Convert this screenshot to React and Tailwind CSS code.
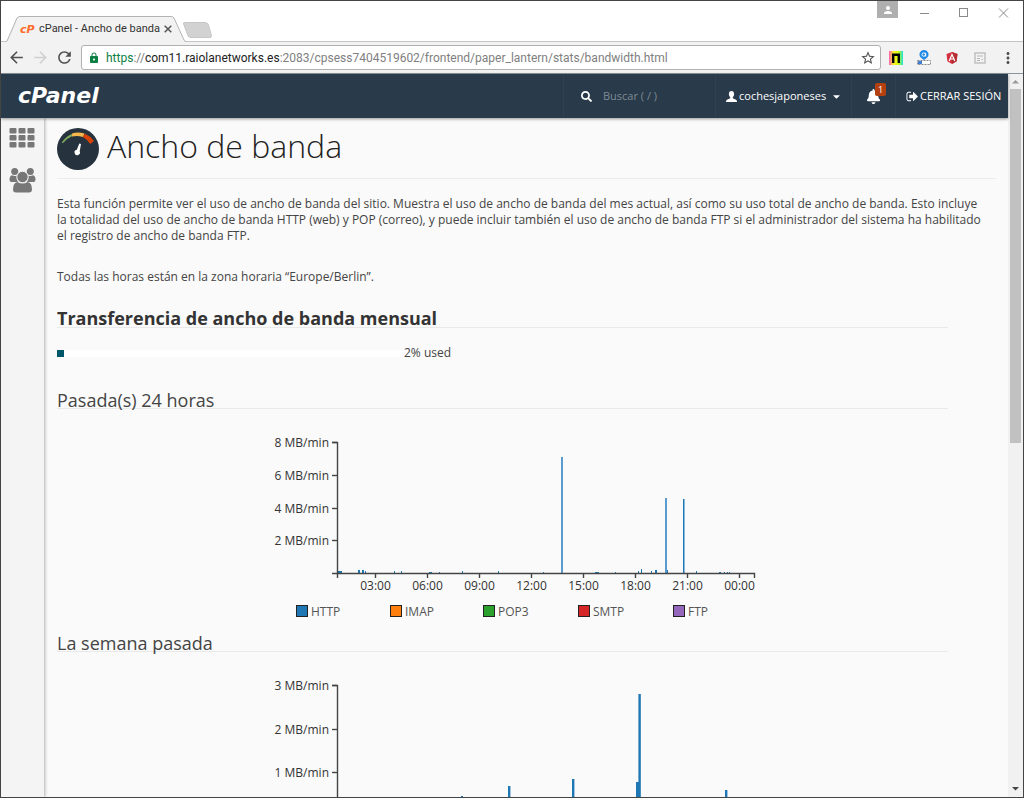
import React from "react";
import { FaSearch, FaBell, FaCaretDown } from "react-icons/fa";
import { MdArrowBack, MdArrowForward, MdRefresh, MdLock, MdStarBorder, MdMoreVert, MdPerson } from "react-icons/md";

const dayBars = [
  [91, 2, 4], [111, 3, 2], [115, 3, 2], [118, 2, 1], [147, 2, 1], [154, 2, 1], [182, 1, 3], [192, 1, 1],
  [215, 2, 1], [251, 2, 1], [296, 1, 1], [314, 116, 2, "#5a9bd0"], [348, 1, 4], [368, 1, 1], [391, 2, 1], [394, 4, 1],
  [404, 2, 1], [408, 3, 2], [418, 75, 2, "#5a9bd0"], [420, 3, 1], [436, 74, 1], [437, 74, 1, "#8ab8da"], [449, 2, 1],
  [472, 1, 2], [477, 1, 1], [480, 1, 1], [482, 1, 1],
];
const weekBars = [
  [214, 20, 2], [261, 30, 2.4], [325, 37, 2.4], [389, 34, 3], [391.4, 122, 2.4], [478, 26, 2.4], [493, 19, 1.5],
];
const hours = ["03:00", "06:00", "09:00", "12:00", "15:00", "18:00", "21:00", "00:00"];
const dayTicks = hours.map((label, i) => ({ label, x: 128 + i * 52 }));
const protocols = [
  ["HTTP", "#1f77b4", 49], ["IMAP", "#ff7f0e", 143], ["POP3", "#2ca02c", 236], ["SMTP", "#d62728", 331], ["FTP", "#9467bd", 426],
];

function BandwidthChart({ title, max, step, bars, ticks = [], legend = [] }) {
  const top = 16;
  const base = 147;
  const rows = [];
  for (let v = max; v >= step; v -= step) rows.push({ v, y: Math.round(base - (v / max) * (base - top)) });
  return (
    <svg className="mx-auto mt-[17px] block" width="511" height="197" role="img" aria-label={title}>
      {bars.map(([x, h, w, fill = "#1f77b4"]) => (
        <rect key={x} x={x} y={base - h} width={w} height={h} fill={fill} />
      ))}
      <g fill="none" stroke="#444" strokeWidth="1.4">
        <path d={`M85 ${top + 0.5}H90.5V${base + 0.5}H85`} />
        {rows.map((r) => <path key={r.v} d={`M85 ${r.y + 0.5}H90`} />)}
        <path d={`M90.5 ${base + 5}V${base + 0.5}H507.5V${base + 5}`} />
        {ticks.map((t) => <path key={t.label} d={`M${t.x + 0.5} ${base}V${base + 5}`} />)}
      </g>
      <g fill="#333" fontSize="12">
        {rows.map((r) => <text key={r.v} x="82" y={r.y + 5} textAnchor="end">{r.v} MB/min</text>)}
        {ticks.map((t) => <text key={t.label} x={t.x + 0.5} y={base + 17} textAnchor="middle">{t.label}</text>)}
      </g>
      {legend.map(([name, color, x]) => (
        <g key={name}>
          <rect x={x + 0.5} y="179.5" width="11" height="11" fill={color} stroke="#222" />
          <text x={x + 15} y="190" fontSize="12" fill="#555">{name}</text>
        </g>
      ))}
    </svg>
  );
}

function SectionTitle({ children, bold }) {
  return (
    <h2 className={`border-b border-[#e9e9e9] text-[18px] ${bold ? "font-bold leading-[18px] text-[#333]" : "pt-[2px] font-normal leading-4 text-[#444]"}`}>
      {children}
    </h2>
  );
}

function TitleBar() {
  return (
    <div className="flex h-10 shrink-0 items-start bg-white">
      <div className="relative z-10 ml-[5px] mt-[15px] flex h-[26px] w-[180px] shrink-0 items-center">
        <svg className="absolute inset-0" width="180" height="26" aria-hidden="true">
          <path d="M0 26L1 25L11 2Q12 .5 14 .5H165Q167 .5 168 2L178 25L180 26Z" fill="#f2f2f2" />
          <path d="M0 25.5Q1 25.5 1.5 24L11 2Q12 .5 14 .5H165Q167 .5 168 2L178 24Q178.5 25.5 180 25.5" fill="none" stroke="#b3b3b3" />
        </svg>
        <span className="relative ml-[14px] w-[19px] shrink-0 font-['DejaVu_Sans',sans-serif] text-[11px] font-bold italic leading-none text-[#ff6c2c]" aria-hidden="true">cP</span>
        <span className="relative flex-1 whitespace-nowrap font-['Roboto',sans-serif] text-[11px] text-[#333]">cPanel - Ancho de banda</span>
        <button className="relative mr-[14px]" aria-label="Cerrar pestaña">
          <svg width="8" height="8" viewBox="0 0 8 8" stroke="#555" strokeWidth="1.5"><path d="M.7 .7L7.3 7.3M7.3 .7L.7 7.3" /></svg>
        </button>
      </div>
      <button className="-ml-[3px] mt-[21px] shrink-0" aria-label="Nueva pestaña">
        <svg className="block" width="29" height="16" viewBox="0 0 29 16"><path d="M1.5 .5H22Q24 .5 25 2L28.4 13Q28.8 15.5 27 15.5H8Q6 15.5 5 14L.6 2Q.2 .5 1.5 .5Z" fill="#d2d2d2" stroke="#c6c6c6" /></svg>
      </button>
      <div className="ml-auto flex items-start">
        <button className="flex h-[17px] w-[21px] items-center justify-center bg-[#afafaf] text-white" aria-label="Perfil"><MdPerson size={12} /></button>
        <button className="ml-[22px] mt-[7px]" aria-label="Minimizar"><svg className="block" width="10" height="10"><path d="M0 5.5H9" stroke="#8a8a8a" /></svg></button>
        <button className="ml-[29px] mt-[7px]" aria-label="Maximizar"><svg className="block" width="10" height="10"><rect x=".5" y=".5" width="8" height="8" fill="none" stroke="#8a8a8a" /></svg></button>
        <button className="ml-[29px] mr-[14px] mt-[7px]" aria-label="Cerrar"><svg className="block" width="11" height="10"><path d="M1 .5L10 9.5M10 .5L1 9.5" stroke="#8a8a8a" /></svg></button>
      </div>
    </div>
  );
}

function Toolbar() {
  return (
    <div className="flex h-[33px] shrink-0 items-center border-y border-b-[#8d959c] border-t-[#c4c4c4] bg-[#f2f2f2] text-[#505050]">
      <button className="ml-[6px]" aria-label="Atrás"><MdArrowBack size={19} /></button>
      <button className="ml-[5px] text-[#d0d0d0]" aria-label="Adelante"><MdArrowForward size={19} /></button>
      <button className="ml-[5px]" aria-label="Recargar"><MdRefresh size={19} /></button>
      <div className="ml-[7px] flex h-[25px] min-w-0 flex-1 items-center rounded-[3px] border border-[#b0b0b0] bg-white">
        <MdLock className="ml-[6px] shrink-0 text-[#0b8043]" size={12} />
        <div className="ml-[6px] flex-1 truncate font-['Roboto',sans-serif] text-[12px] text-[#808080]">
          <span className="text-[#0b8043]">https</span>://<span className="text-[#222]">com11.raiolanetworks.es</span>:2083/cpsess7404519602/frontend/paper_lantern/stats/bandwidth.html
        </div>
        <button className="mr-[4px]" aria-label="Añadir a marcadores"><MdStarBorder size={16} /></button>
      </div>
      <div className="ml-2 mr-2 flex items-center gap-[14px]">
        <button aria-label="Extensión n">
          <svg className="block" width="14" height="14" viewBox="0 0 14 14">
            <defs><linearGradient id="hue"><stop offset="0" stopColor="#ff5fb0" /><stop offset=".3" stopColor="#ffe92e" /><stop offset=".65" stopColor="#d9ff00" /><stop offset="1" stopColor="#19e0dc" /></linearGradient></defs>
            <rect width="14" height="14" fill="url(#hue)" />
            <path d="M4.2 12V3.7H9.8V12" fill="none" stroke="#000" strokeWidth="2.4" />
          </svg>
        </button>
        <button aria-label="Alexa">
          <svg className="block" width="14" height="15" viewBox="0 0 14 15">
            <path d="M7 0a4.4 4.4 0 0 1 3 7.7L7 10 4 7.7A4.4 4.4 0 0 1 7 0Z" fill="#1e88e5" />
            <circle cx="6.7" cy="4.6" r="1.7" fill="none" stroke="#fff" /><path d="M8.7 2.8V6.5" stroke="#fff" />
            <rect x=".5" y="10.5" width="13" height="4" fill="#fff" stroke="#888" strokeDasharray="2 1" /><rect x="1" y="11" width="4" height="3" fill="#3f7fd6" />
          </svg>
        </button>
        <button aria-label="Angular">
          <svg className="block" width="14" height="14" viewBox="0 0 14 14">
            <path d="M7 1L12.5 3 11.6 10.3 7 13 2.4 10.3 1.5 3Z" fill="#d32f3f" /><path d="M7 1L12.5 3 11.6 10.3 7 13Z" fill="#b52e31" />
            <path d="M4.2 10L7 3.5 9.8 10M5.3 8H8.7" fill="none" stroke="#fff" strokeWidth="1.2" />
          </svg>
        </button>
        <button aria-label="Lector">
          <svg className="block" width="14" height="14" viewBox="0 0 14 14" fill="none" stroke="#b8b8b8"><rect x="2" y="2" width="10" height="10" strokeWidth="1.3" /><path d="M4 5H10M4 7.5H7M4 9.5H7M8.5 8.5H10" /></svg>
        </button>
        <button className="flex w-[14px] justify-center" aria-label="Menú"><MdMoreVert className="shrink-0" size={18} /></button>
      </div>
    </div>
  );
}

function AppHeader() {
  return (
    <header className="relative z-20 flex h-11 shrink-0 items-stretch bg-[#293a4a] text-[11px] text-white shadow-[0_1px_3px_rgba(0,0,0,0.4)]">
      <a href="#inicio" className="flex items-center pl-[17px] font-['DejaVu_Sans',sans-serif] text-[22px] font-bold italic leading-none">cPanel</a>
      <div className="ml-auto flex items-stretch">
        <label className="flex w-[152px] items-center gap-[11px] border-l border-[#2f4150] pl-[17px]">
          <FaSearch className="shrink-0" size={11} />
          <input type="search" aria-label="Buscar" placeholder="Buscar ( / )" className="w-[90px] bg-transparent outline-none placeholder:text-[#7f8a94]" />
        </label>
        <button className="flex w-[136px] items-center border-l border-[#2f4150] pl-[10px]">
          <svg className="shrink-0" width="11" height="11" viewBox="0 0 11 11" fill="#fff" aria-hidden="true"><path d="M5.5 0C7.2 0 8.1 1.2 8.1 3 8.1 4.7 7.3 5.6 6.8 6.3V7.2L10 8.7Q11 9.2 11 11H0Q0 9.2 1 8.7L4.2 7.2V6.3C3.7 5.6 2.9 4.7 2.9 3 2.9 1.2 3.8 0 5.5 0Z" /></svg>
          <span className="ml-[2px] flex-1 text-left">cochesjaponeses</span>
          <FaCaretDown className="mr-[9px]" size={11} />
        </button>
        <button className="relative flex w-[44px] items-center justify-center border-l border-[#2f4150]" aria-label="Notificaciones">
          <FaBell size={15} />
          <span className="absolute right-[9px] top-[9px] flex h-[13px] w-[11px] items-center justify-center rounded-[2px] bg-[#b5400f] text-[9px]">1</span>
        </button>
        <a href="#salir" className="flex w-[113px] items-center gap-[1px] whitespace-nowrap border-l border-[#2f4150] pl-[10px]">
          <svg className="shrink-0" width="13" height="13" viewBox="0 0 1792 1792" fill="#fff" aria-hidden="true"><path d="M704 1440q0 4 1 20t.5 26.5-3 23.5-10 19.5-20.5 6.5h-320q-119 0-203.5-84.5t-84.5-203.5v-704q0-119 84.5-203.5t203.5-84.5h320q13 0 22.5 9.5t9.5 22.5q0 4 1 20t.5 26.5-3 23.5-10 19.5-20.5 6.5h-320q-66 0-113 47t-47 113v704q0 66 47 113t113 47h312l11.5 1 11.5 3 8 5.5 7 9 2 13.5zm928-544q0 26-19 45l-544 544q-19 19-45 19t-45-19-19-45v-288h-448q-26 0-45-19t-19-45v-384q0-26 19-45t45-19h448v-288q0-26 19-45t45-19 45 19l544 544q19 19 19 45z" /></svg>
          CERRAR SESIÓN
        </a>
      </div>
    </header>
  );
}

function Sidebar() {
  return (
    <nav className="z-10 flex w-[43px] shrink-0 flex-col items-start gap-5 bg-[#f4f4f4] pl-2 pt-[10px] shadow-[1px_0_3px_rgba(0,0,0,0.3)]">
      <a href="#inicio" aria-label="Inicio">
        <svg className="block" width="26" height="20" viewBox="0 0 26 20" fill="#777">
          {[0, 7, 14].map((y) => [0, 9, 18].map((x) => <rect key={`${x}-${y}`} x={x + 0.5} y={y} width="7" height="5.5" rx="1" />))}
        </svg>
      </a>
      <a href="#usuarios" aria-label="Gestión de usuarios">
        <svg className="block" width="27" height="25" viewBox="0 0 27 25" fill="#777">
          <circle cx="5.7" cy="3.6" r="3.5" /><circle cx="21.3" cy="3.6" r="3.5" />
          <path d="M3 7.3Q5.7 8.8 8 7.5Q7 11 9 14H2.5Q.5 14 .5 11.5 .5 8 3 7.3ZM24 7.3Q21.3 8.8 19 7.5Q20 11 18 14H24.5Q26.5 14 26.5 11.5 26.5 8 24 7.3Z" />
          <circle cx="13.5" cy="9" r="5.7" stroke="#f4f4f4" />
          <path d="M8.5 14Q13.500 17 18.500 14Q23 14.500 23 21.500Q23 24.500 20 24.500H7Q4 24.500 4 21.500Q4 14.500 8.500 14Z" />
        </svg>
      </a>
    </nav>
  );
}

function GaugeIcon() {
  return (
    <svg className="block shrink-0" width="42" height="42" viewBox="0 0 42 42" aria-hidden="true">
      <circle cx="21" cy="21" r="21" fill="#26323d" />
      <path d="M4.8 14.5Q8.5 8.8 15 6V8.3Q9.5 10.5 5.8 15.2Z" fill="#7faf5b" />
      <path d="M15 5.4Q21 3.6 27.5 5.6L26 9Q20.5 7.2 15 8.5Z" fill="#f5b74c" />
      <path d="M28 5.7Q33.5 8 37 13L33.3 16Q30.5 11.5 25.8 9Z" fill="#d64309" />
      <path d="M22.3 15.6L24 16.1 22.7 23.3A2.7 2.7 0 1 1 19.8 21.8Z" fill="#fff" />
    </svg>
  );
}

function Scrollbar() {
  return (
    <div className="flex w-[15px] shrink-0 flex-col items-center bg-[#f1f1f1]" aria-hidden="true">
      <svg className="block shrink-0" width="15" height="15"><path d="M4 9.5L7.5 6L11 9.5Z" fill="#999" /></svg>
      <div className="h-[49%] w-[11px] bg-[#c1c1c1]" />
      <svg className="mt-auto block shrink-0" width="15" height="15"><path d="M4 5L7.5 8.5L11 5Z" fill="#444" /></svg>
    </div>
  );
}

export default function App() {
  return (
    <div className="flex h-screen flex-col overflow-hidden border border-[#444] bg-[#fafafa] font-['Open_Sans','Noto_Sans',sans-serif]">
      <TitleBar />
      <Toolbar />
      <div className="flex min-h-0 flex-1">
        <div className="flex min-w-0 flex-1 flex-col">
          <AppHeader />
          <div className="flex min-h-0 flex-1">
            <Sidebar />
            <main className="min-w-0 flex-1 overflow-y-auto pl-[13px] pr-[12px] pt-[10px] text-[12px] leading-4 text-[#444] [scrollbar-width:none]">
              <div className="flex h-[51px] items-start gap-2 border-b border-[#ececec]">
                <GaugeIcon />
                <h1 className="text-[32px] font-light leading-[36px] text-[#222]">Ancho de banda</h1>
              </div>
              <p className="mt-[17px] pr-2">
                Esta función permite ver el uso de ancho de banda del sitio. Muestra el uso de ancho de banda del mes actual, así como su uso total de ancho de banda. Esto incluye la totalidad del uso de ancho de banda HTTP (web) y POP (correo), y puede incluir también el uso de ancho de banda FTP si el administrador del sistema ha habilitado el registro de ancho de banda FTP.
              </p>
              <p className="mt-[25px]">Todas las horas están en la zona horaria “Europe/Berlin”.</p>
              <div className="mr-12 mt-6">
                <SectionTitle bold>Transferencia de ancho de banda mensual</SectionTitle>
                <div className="mt-[17px] flex items-center gap-[2px]">
                  <div className="h-[7px] w-[345px] bg-white"><div className="h-full w-[2%] bg-[#00566b]" /></div>
                  <span>2% used</span>
                </div>
                <div className="mt-[29px]">
                  <SectionTitle>Pasada(s) 24 horas</SectionTitle>
                  <BandwidthChart title="Pasada(s) 24 horas" max={8} step={2} bars={dayBars} ticks={dayTicks} legend={protocols} />
                </div>
                <div className="mt-[10px]">
                  <SectionTitle>La semana pasada</SectionTitle>
                  <BandwidthChart title="La semana pasada" max={3} step={1} bars={weekBars} />
                </div>
              </div>
            </main>
          </div>
        </div>
        <Scrollbar />
      </div>
    </div>
  );
}
